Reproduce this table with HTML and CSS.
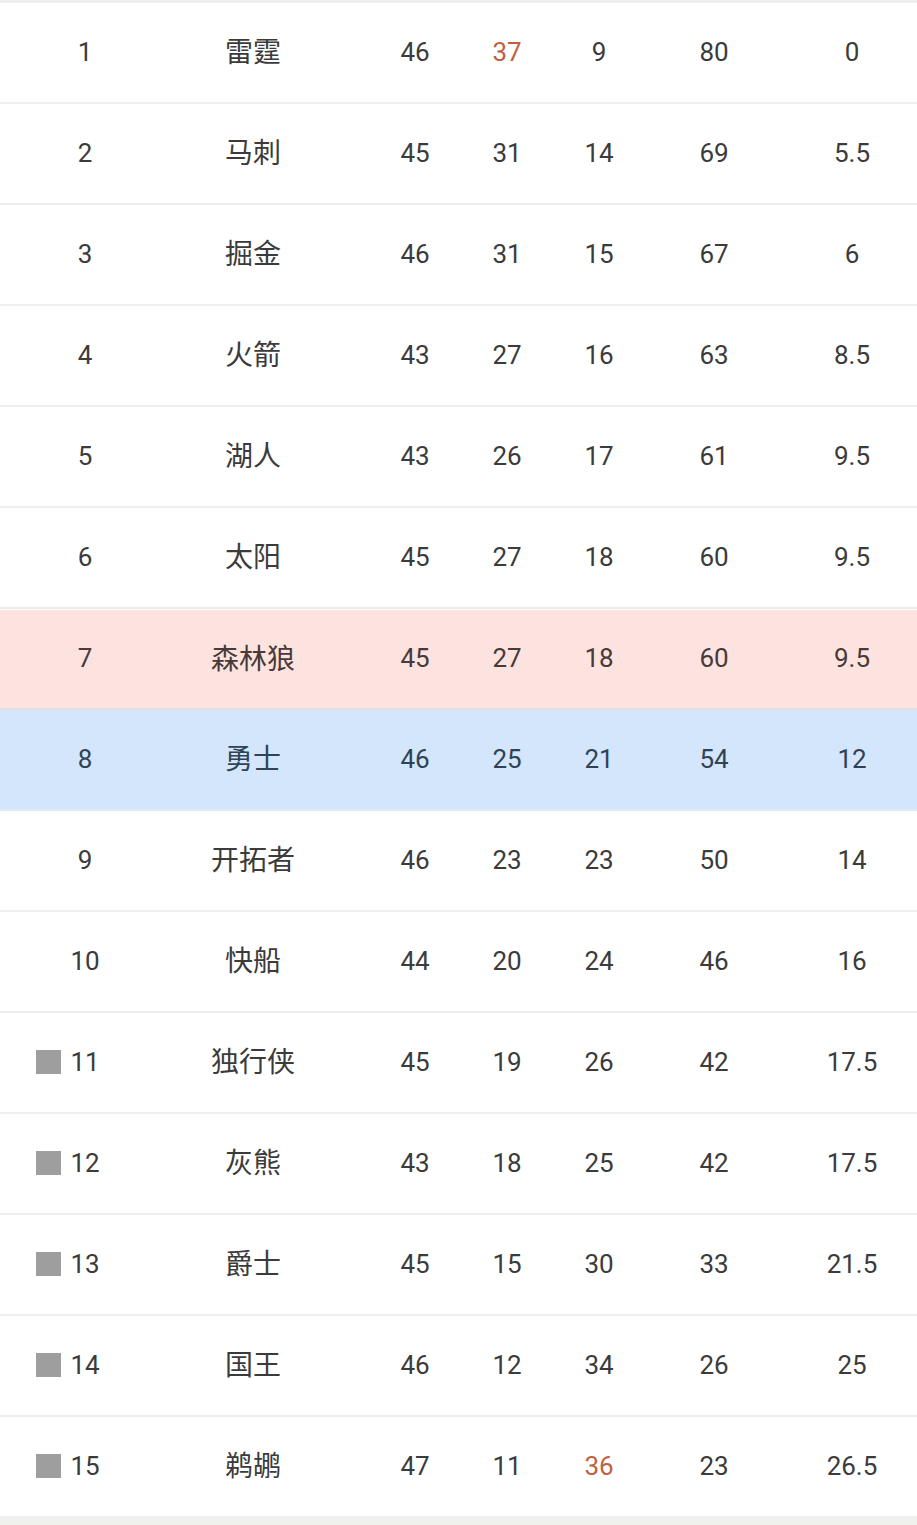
FILE: index.html
```html
<!DOCTYPE html>
<html lang="zh-CN">
<head>
<meta charset="utf-8">
<title>排名</title>
<link rel="stylesheet" href="styles.css">
</head>
<body>
<div class="standings">
  <div class="row"><span class="cell rank"><span class="num">1</span></span><span class="cell team">雷霆</span><span class="cell">46</span><span class="cell hot">37</span><span class="cell">9</span><span class="cell">80</span><span class="cell">0</span></div>
  <div class="row"><span class="cell rank"><span class="num">2</span></span><span class="cell team">马刺</span><span class="cell">45</span><span class="cell">31</span><span class="cell">14</span><span class="cell">69</span><span class="cell">5.5</span></div>
  <div class="row"><span class="cell rank"><span class="num">3</span></span><span class="cell team">掘金</span><span class="cell">46</span><span class="cell">31</span><span class="cell">15</span><span class="cell">67</span><span class="cell">6</span></div>
  <div class="row"><span class="cell rank"><span class="num">4</span></span><span class="cell team">火箭</span><span class="cell">43</span><span class="cell">27</span><span class="cell">16</span><span class="cell">63</span><span class="cell">8.5</span></div>
  <div class="row"><span class="cell rank"><span class="num">5</span></span><span class="cell team">湖人</span><span class="cell">43</span><span class="cell">26</span><span class="cell">17</span><span class="cell">61</span><span class="cell">9.5</span></div>
  <div class="row row--pre"><span class="cell rank"><span class="num">6</span></span><span class="cell team">太阳</span><span class="cell">45</span><span class="cell">27</span><span class="cell">18</span><span class="cell">60</span><span class="cell">9.5</span></div>
  <div class="row row--pink"><span class="cell rank"><span class="num">7</span></span><span class="cell team">森林狼</span><span class="cell">45</span><span class="cell">27</span><span class="cell">18</span><span class="cell">60</span><span class="cell">9.5</span></div>
  <div class="row row--blue"><span class="cell rank"><span class="num">8</span></span><span class="cell team">勇士</span><span class="cell">46</span><span class="cell">25</span><span class="cell">21</span><span class="cell">54</span><span class="cell">12</span></div>
  <div class="row"><span class="cell rank"><span class="num">9</span></span><span class="cell team">开拓者</span><span class="cell">46</span><span class="cell">23</span><span class="cell">23</span><span class="cell">50</span><span class="cell">14</span></div>
  <div class="row"><span class="cell rank"><span class="num">10</span></span><span class="cell team">快船</span><span class="cell">44</span><span class="cell">20</span><span class="cell">24</span><span class="cell">46</span><span class="cell">16</span></div>
  <div class="row"><span class="cell rank"><span class="num marked">11</span></span><span class="cell team">独行侠</span><span class="cell">45</span><span class="cell">19</span><span class="cell">26</span><span class="cell">42</span><span class="cell">17.5</span></div>
  <div class="row"><span class="cell rank"><span class="num marked">12</span></span><span class="cell team">灰熊</span><span class="cell">43</span><span class="cell">18</span><span class="cell">25</span><span class="cell">42</span><span class="cell">17.5</span></div>
  <div class="row"><span class="cell rank"><span class="num marked">13</span></span><span class="cell team">爵士</span><span class="cell">45</span><span class="cell">15</span><span class="cell">30</span><span class="cell">33</span><span class="cell">21.5</span></div>
  <div class="row"><span class="cell rank"><span class="num marked">14</span></span><span class="cell team">国王</span><span class="cell">46</span><span class="cell">12</span><span class="cell">34</span><span class="cell">26</span><span class="cell">25</span></div>
  <div class="row"><span class="cell rank"><span class="num marked">15</span></span><span class="cell team">鹈鹕</span><span class="cell">47</span><span class="cell">11</span><span class="cell hot">36</span><span class="cell">23</span><span class="cell">26.5</span></div>
</div>
</body>
</html>
```

FILE: styles.css
```css
html, body {
  margin: 0;
  padding: 0;
  background: #f0f0ec;
}

body {
  font-family: Roboto, "Noto Sans CJK SC", "Noto Sans", sans-serif;
  color: #3b3b3b;
}

.standings {
  background: #ffffff;
  margin-top: 1px;
  border-top: 2px solid #efefef;
}

.row {
  display: grid;
  grid-template-columns: 90px 246px 78px 106px 78px 152px 124px;
  padding: 0 3px 0 40px;
  height: 99px;
  align-items: center;
  border-bottom: 2px solid #efefef;
  font-size: 26px;
  line-height: 1;
}

.cell {
  display: flex;
  justify-content: center;
  align-items: center;
  white-space: nowrap;
  padding-bottom: 2px;
}

.team {
  font-family: "Noto Sans CJK SC", sans-serif;
  font-size: 28px;
  padding-bottom: 5px;
}

.hot {
  color: #c0623f;
}

.num {
  position: relative;
}

.marked::before {
  content: "";
  position: absolute;
  right: calc(100% + 9px);
  top: 50%;
  width: 25px;
  height: 24px;
  margin-top: -12px;
  background: #9e9e9e;
}

.row--pre {
  border-bottom: 2px solid #ecebe9;
}

.row--pink {
  background: #fde3df;
  border-top: 1px solid #ffffff;
  height: 98px;
  color: #473a38;
  border-bottom: 2px solid #e2dfe2;
}

.row--blue {
  background: #d4e6fb;
  color: #2f4256;
  border-bottom: 2px solid #dde9f4;
}
```
